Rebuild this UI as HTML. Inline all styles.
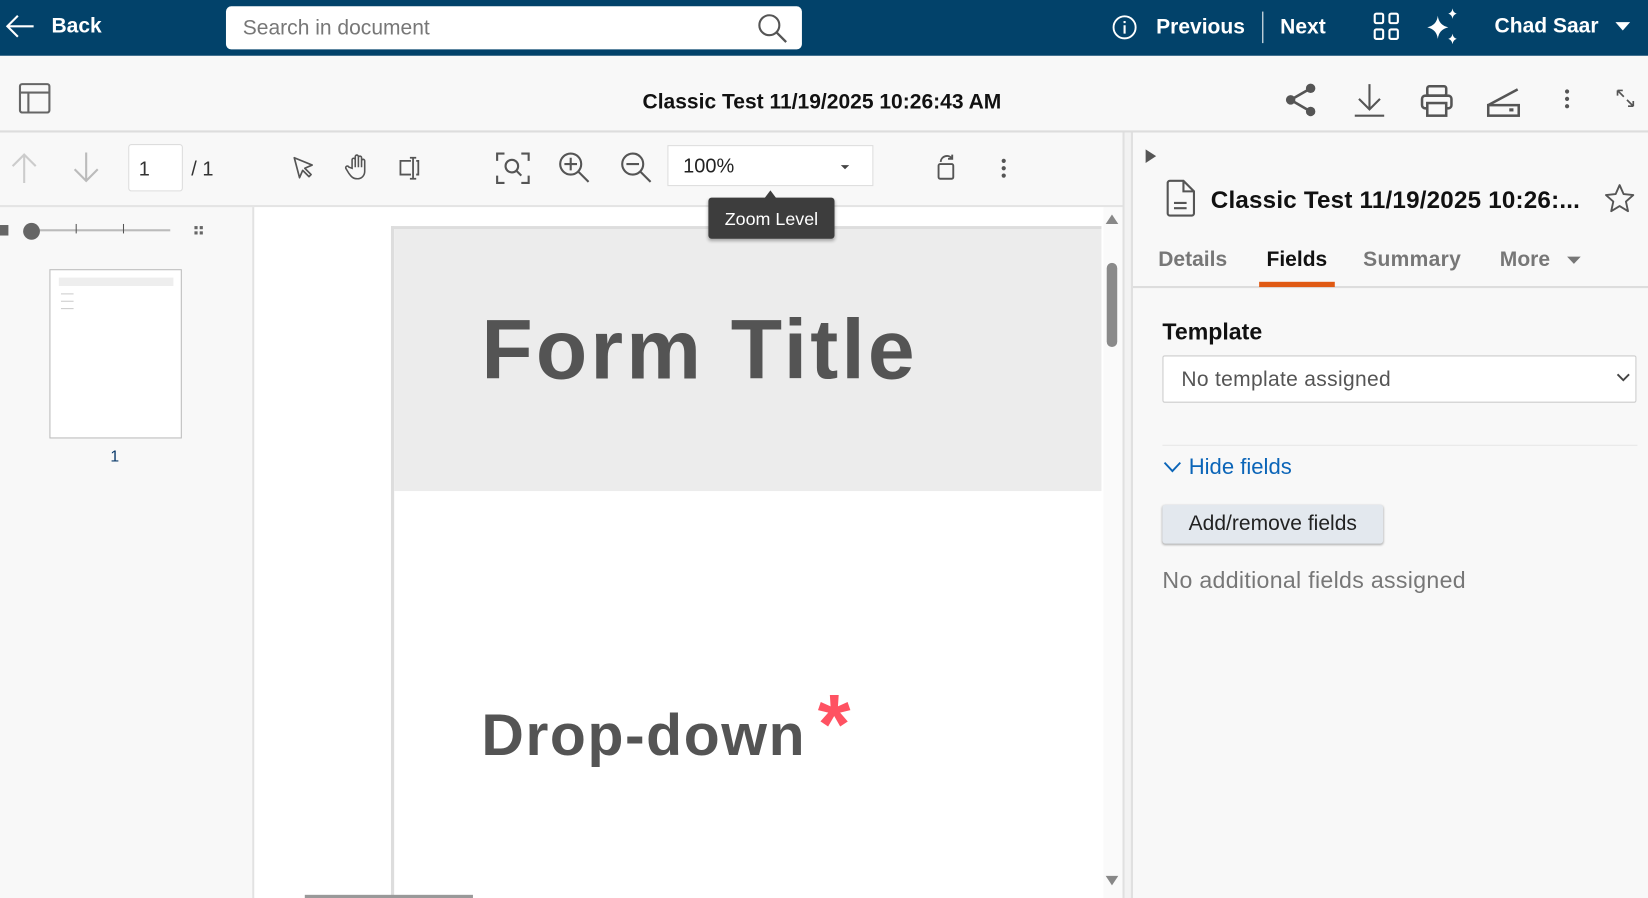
<!DOCTYPE html>
<html><head><meta charset="utf-8"><style>
*{box-sizing:border-box;margin:0;padding:0}
html,body{width:1648px;height:898px;overflow:hidden;background:#f8f8f8}
#w{position:absolute;left:0;top:0;width:1568px;height:854px;transform:scale(1.05102,1.0515);transform-origin:0 0;font-family:"Liberation Sans",sans-serif;background:#f8f8f8;overflow:hidden}
.a{position:absolute}
svg{position:absolute;overflow:visible}
.t{white-space:nowrap}
</style></head><body><div id="w">
<div class="a" style="left:0;top:0;width:1568px;height:53px;background:#02426a"></div>
<svg style="left:4px;top:13px" width="30" height="24"><path d="M28 12H3M13 2L3 12l10 10" stroke="#fff" stroke-width="2" fill="none"/></svg>
<div class="a t" style="left:49px;top:14px;color:#fff;font-size:20px;font-weight:bold">Back</div>
<div class="a" style="left:215px;top:6px;width:548px;height:41px;background:#fff;border-radius:5px"></div>
<div class="a t" style="left:231px;top:16px;color:#777;font-size:20px">Search in document</div>
<svg style="left:720px;top:12px" width="30" height="30"><circle cx="12" cy="12" r="9.5" stroke="#555" stroke-width="2" fill="none"/><path d="M19 19l9 9" stroke="#555" stroke-width="2.2"/></svg>
<svg style="left:1058px;top:14px" width="24" height="24"><circle cx="12" cy="12" r="10.5" stroke="#fff" stroke-width="1.8" fill="none"/><path d="M12 10v8M12 6v2" stroke="#fff" stroke-width="2"/></svg>
<div class="a t" style="left:1100px;top:15px;color:#fff;font-size:20px;font-weight:bold">Previous</div>
<div class="a" style="left:1201px;top:11px;width:1px;height:30px;background:#fff"></div>
<div class="a t" style="left:1218px;top:15px;color:#fff;font-size:20px;font-weight:bold">Next</div>
<svg style="left:1307px;top:12px" width="26" height="28"><g stroke="#fff" stroke-width="2" fill="none"><rect x="1" y="1" width="8" height="9" rx="1.5"/><rect x="15" y="1" width="8" height="9" rx="1.5"/><rect x="1" y="16" width="8" height="9" rx="1.5"/><rect x="15" y="16" width="8" height="9" rx="1.5"/></g></svg>
<svg style="left:1356px;top:7px" width="36" height="36"><path d="M12 8Q13 17 22 19Q13 21 12 30Q11 21 2 19Q11 17 12 8Z" fill="#fff"/><path d="M26 1Q26.5 5 30 6Q26.5 7 26 11Q25.5 7 22 6Q25.5 5 26 1Z" fill="#fff"/><path d="M26 25Q26.5 29 30 30Q26.5 31 26 35Q25.5 31 22 30Q25.5 29 26 25Z" fill="#fff"/></svg>
<div class="a t" style="left:1422px;top:14px;color:#fff;font-size:20px;font-weight:bold">Chad Saar</div>
<svg style="left:1537px;top:21px" width="14" height="9"><path d="M0 0h14L7 8z" fill="#fff"/></svg>
<div class="a" style="left:0;top:124px;width:1568px;height:2px;background:#ddd"></div>
<svg style="left:18px;top:79px" width="30" height="30"><g stroke="#666" stroke-width="2" fill="none"><rect x="1" y="1" width="28" height="27" rx="2"/><path d="M1 9h28M9 9v19"/></g></svg>
<div class="a t" style="left:0;top:86px;width:1564px;text-align:center;font-size:20px;font-weight:bold;color:#111">Classic Test 11/19/2025 10:26:43 AM</div>
<svg style="left:1222px;top:78px" width="32" height="34"><g fill="#555"><circle cx="25" cy="6" r="4.5"/><circle cx="6" cy="17" r="4.5"/><circle cx="25" cy="28" r="4.5"/></g><path d="M25 6L6 17l19 11" stroke="#555" stroke-width="2.5" fill="none"/></svg>
<svg style="left:1287px;top:80px" width="32" height="32"><path d="M16 0v24M6 14l10 10 10-10M2 30h28" stroke="#555" stroke-width="2" fill="none"/></svg>
<svg style="left:1351px;top:80px" width="32" height="32"><g stroke="#555" stroke-width="2.4" fill="none"><rect x="7" y="2" width="18" height="9" rx="2"/><rect x="2" y="11" width="28" height="12" rx="3"/><rect x="7" y="18" width="18" height="12" fill="#f8f8f8"/></g></svg>
<svg style="left:1414px;top:83px" width="34" height="30"><g stroke="#555" stroke-width="2.4" fill="none"><path d="M2 17L30 2"/><rect x="2" y="17" width="29" height="10"/></g><rect x="22" y="20" width="4" height="3" fill="#555"/></svg>
<svg style="left:1488px;top:84px" width="6" height="20"><g fill="#555"><circle cx="3" cy="3" r="2"/><circle cx="3" cy="10" r="2"/><circle cx="3" cy="17" r="2"/></g></svg>
<svg style="left:1537px;top:84px" width="20" height="20"><path d="M2 2l6 6M2 2v5M2 2h5M17 17l-6-6M17 17v-5M17 17h-5" stroke="#555" stroke-width="1.6" fill="none"/></svg>
<div class="a" style="left:0;top:195px;width:1070px;height:2px;background:#e4e4e4"></div>
<svg style="left:10px;top:144px" width="26" height="32"><path d="M13 30V3M2 14L13 3l11 11" stroke="#ccc" stroke-width="2" fill="none"/></svg>
<svg style="left:69px;top:144px" width="26" height="32"><path d="M13 1v27M2 17l11 11 11-11" stroke="#bbb" stroke-width="2" fill="none"/></svg>
<div class="a" style="left:122px;top:137px;width:52px;height:45px;background:#fff;border:1px solid #ddd;border-radius:3px"></div>
<div class="a t" style="left:132px;top:151px;font-size:19px;color:#333">1</div>
<div class="a t" style="left:182px;top:151px;font-size:19px;color:#333">/ 1</div>
<svg style="left:278px;top:148px" width="22" height="22"><path d="M2 2l17 7-7 3 6 6-2 2-6-6-3 7z" stroke="#555" stroke-width="1.6" fill="none" stroke-linejoin="round"/></svg>
<svg style="left:329px;top:146px" width="24" height="26"><path d="M6 14V6a1.5 1.5 0 0 1 3 0v7V3a1.5 1.5 0 0 1 3 0v10V4a1.5 1.5 0 0 1 3 0v9V7a1.5 1.5 0 0 1 3 0v10c0 4-3 7-7 7s-6-2-8-5l-3-5a1.5 1.5 0 0 1 3-1z" stroke="#555" stroke-width="1.5" fill="none"/></svg>
<svg style="left:379px;top:148px" width="26" height="24"><g stroke="#555" stroke-width="1.7" fill="none"><path d="M12 5H2v13h10M17 5h2v13h-2"/><path d="M14 2v20M11 2h6M11 22h6"/></g></svg>
<svg style="left:472px;top:144px" width="32" height="32"><g stroke="#555" stroke-width="2" fill="none"><path d="M1 9V2h7M24 2h7v7M31 23v7h-7M8 30H1v-7"/><circle cx="15" cy="14" r="6"/><path d="M19 18l5 5"/></g></svg>
<svg style="left:531px;top:144px" width="32" height="32"><g stroke="#555" stroke-width="2" fill="none"><circle cx="12" cy="12" r="10"/><path d="M19 19l10 10M12 6v12M6 12h12"/></g></svg>
<svg style="left:590px;top:144px" width="32" height="32"><g stroke="#555" stroke-width="2" fill="none"><circle cx="12" cy="12" r="10"/><path d="M19 19l10 10M6 12h12"/></g></svg>
<div class="a" style="left:635px;top:138px;width:196px;height:39px;background:#fff;border:1px solid #ddd"></div>
<div class="a t" style="left:650px;top:148px;font-size:19px;color:#222">100%</div>
<svg style="left:800px;top:157px" width="8" height="5"><path d="M0 0h8L4 4z" fill="#444"/></svg>
<svg style="left:891px;top:146px" width="20" height="26"><g stroke="#555" stroke-width="1.8" fill="none"><rect x="2" y="10" width="14" height="14" rx="1.5"/><path d="M4 8a6 6 0 0 1 11-3M15 1v4h-4"/></g></svg>
<svg style="left:952px;top:150px" width="6" height="20"><g fill="#555"><circle cx="3" cy="3" r="2"/><circle cx="3" cy="10" r="2"/><circle cx="3" cy="17" r="2"/></g></svg>
<div class="a" style="left:240px;top:197px;width:2px;height:657px;background:#e2e2e2"></div>
<div class="a" style="left:0;top:214px;width:8px;height:10px;background:#666"></div>
<div class="a" style="left:30px;top:218px;width:132px;height:2px;background:#bbb"></div>
<div class="a" style="left:72px;top:213px;width:1px;height:9px;background:#555"></div>
<div class="a" style="left:117px;top:213px;width:1px;height:9px;background:#555"></div>
<div class="a" style="left:22px;top:212px;width:16px;height:16px;border-radius:50%;background:#666"></div>
<svg style="left:185px;top:215px" width="8" height="8"><g fill="#666"><rect width="3" height="3"/><rect x="5" width="3" height="3"/><rect y="5" width="3" height="3"/><rect x="5" y="5" width="3" height="3"/></g></svg>
<div class="a" style="left:47px;top:256px;width:126px;height:161px;background:#fff;border:1px solid #bbb"></div>
<div class="a" style="left:56px;top:264px;width:109px;height:8px;background:#eee"></div>
<div class="a" style="left:58px;top:279px;width:12px;height:1px;background:#ccc"></div>
<div class="a" style="left:58px;top:286px;width:12px;height:1px;background:#ccc"></div>
<div class="a" style="left:58px;top:293px;width:12px;height:1px;background:#ccc"></div>
<div class="a t" style="left:105px;top:426px;font-size:15px;color:#0a3a6a">1</div>
<div class="a" style="left:242px;top:197px;width:808px;height:657px;background:#fff"></div>
<div class="a" style="left:372px;top:215px;width:676px;height:650px;border-left:3px solid #ddd;border-top:3px solid #ddd;background:#fff"></div>
<div class="a" style="left:375px;top:218px;width:673px;height:249px;background:#ececec"></div>
<div class="a t" style="left:458px;top:287px;font-size:80px;font-weight:bold;color:#545454;letter-spacing:3px">Form Title</div>
<div class="a t" style="left:458px;top:666px;font-size:56px;font-weight:bold;color:#545454;letter-spacing:1.5px">Drop-down</div>
<div class="a t" style="left:778px;top:643px;font-size:80px;font-weight:bold;color:#ff5262">*</div>
<div class="a" style="left:1050px;top:197px;width:18px;height:657px;background:#fafafa"></div>
<svg style="left:1052px;top:204px" width="12" height="9"><path d="M0 9h12L6 0z" fill="#888"/></svg>
<svg style="left:1052px;top:833px" width="12" height="9"><path d="M0 0h12L6 9z" fill="#888"/></svg>
<div class="a" style="left:1053px;top:250px;width:10px;height:80px;border-radius:5px;background:#8a8a8a"></div>
<div class="a" style="left:290px;top:851px;width:160px;height:3px;background:#999"></div>
<div class="a" style="left:674px;top:188px;width:120px;height:39px;background:#3d3d3d;border-radius:3px;box-shadow:0 2px 3px rgba(0,0,0,.3)"></div>
<svg style="left:727px;top:181px" width="12" height="8"><path d="M0 8h12L6 0z" fill="#3d3d3d"/></svg>
<div class="a t" style="left:674px;top:199px;width:120px;text-align:center;color:#fff;font-size:17px">Zoom Level</div>
<div class="a" style="left:1068px;top:126px;width:10px;height:728px;background:#f2f2f2;border-left:2px solid #e0e0e0;border-right:2px solid #e0e0e0"></div>
<svg style="left:1090px;top:142px" width="10" height="13"><path d="M0 0l10 6.5L0 13z" fill="#555"/></svg>
<svg style="left:1109px;top:171px" width="30" height="36"><g stroke="#555" stroke-width="2" fill="none"><path d="M2 3a2 2 0 0 1 2-2h13l10 10v21a2 2 0 0 1-2 2H4a2 2 0 0 1-2-2z"/><path d="M17 1v10h10M8 22h12M8 27h12"/></g></svg>
<div class="a t" style="left:1152px;top:177px;font-size:23px;font-weight:bold;color:#111;letter-spacing:0.2px">Classic Test 11/19/2025 10:26:...</div>
<svg style="left:1526px;top:174px" width="30" height="30"><path d="M15 2l3.8 8.6 9.2.9-7 6.2 2 9.1L15 22l-8 4.8 2-9.1-7-6.2 9.2-.9z" stroke="#555" stroke-width="1.8" fill="none" stroke-linejoin="round"/></svg>
<div class="a t" style="left:1102px;top:236px;font-size:20px;font-weight:bold;color:#777">Details</div>
<div class="a t" style="left:1205px;top:236px;font-size:20px;font-weight:bold;color:#111">Fields</div>
<div class="a t" style="left:1297px;top:236px;font-size:20px;font-weight:bold;color:#777;letter-spacing:0.3px">Summary</div>
<div class="a t" style="left:1427px;top:236px;font-size:20px;font-weight:bold;color:#777">More</div>
<svg style="left:1491px;top:244px" width="13" height="8"><path d="M0 0h13L6.5 7z" fill="#777"/></svg>
<div class="a" style="left:1078px;top:272px;width:490px;height:2px;background:#ddd"></div>
<div class="a" style="left:1198px;top:268px;width:72px;height:5px;background:#e05a14"></div>
<div class="a t" style="left:1106px;top:303px;font-size:22px;font-weight:bold;color:#111">Template</div>
<div class="a" style="left:1106px;top:338px;width:451px;height:45px;background:#fff;border:1px solid #ccc;border-radius:2px"></div>
<div class="a t" style="left:1124px;top:350px;font-size:20px;color:#555;letter-spacing:0.3px">No template assigned</div>
<svg style="left:1538px;top:355px" width="13" height="8"><path d="M1 1l5.5 5.5L12 1" stroke="#444" stroke-width="1.8" fill="none"/></svg>
<div class="a" style="left:1106px;top:423px;width:452px;height:1px;background:#e8e8e8"></div>
<svg style="left:1107px;top:439px" width="17" height="11"><path d="M1 1l7.5 8L16 1" stroke="#0b65b8" stroke-width="1.8" fill="none"/></svg>
<div class="a t" style="left:1131px;top:433px;font-size:21px;color:#0b65b8">Hide fields</div>
<div class="a" style="left:1106px;top:480px;width:210px;height:37px;background:#e3e8ee;border-radius:3px;box-shadow:0 1px 2px rgba(0,0,0,.3)"></div>
<div class="a t" style="left:1106px;top:487px;width:210px;text-align:center;font-size:20px;color:#222">Add/remove fields</div>
<div class="a t" style="left:1106px;top:539px;font-size:22px;color:#777;letter-spacing:0.3px">No additional fields assigned</div>
</div></body></html>
